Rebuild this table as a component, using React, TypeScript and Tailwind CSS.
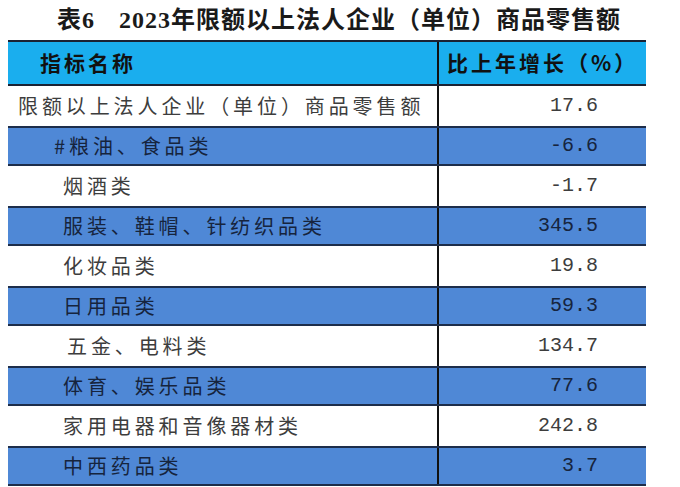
const rows = [
    { name: '限额以上法人企业（单位）商品零售额', value: '17.6', indent: 'pl-[10px]', blue: false },
    { name: '#粮油、食品类', value: '-6.6', indent: 'pl-[46px]', blue: true },
    { name: '烟酒类', value: '-1.7', indent: 'pl-[55px]', blue: false },
    { name: '服装、鞋帽、针纺织品类', value: '345.5', indent: 'pl-[55px]', blue: true },
    { name: '化妆品类', value: '19.8', indent: 'pl-[55px]', blue: false },
    { name: '日用品类', value: '59.3', indent: 'pl-[55px]', blue: true },
    { name: '五金、电料类', value: '134.7', indent: 'pl-[59px]', blue: false },
    { name: '体育、娱乐品类', value: '77.6', indent: 'pl-[55px]', blue: true },
    { name: '家用电器和音像器材类', value: '242.8', indent: 'pl-[55px]', blue: false },
    { name: '中西药品类', value: '3.7', indent: 'pl-[55px]', blue: true },
];

export default function App() {
    return (
        <div className="h-[487px] w-[680px] overflow-hidden bg-white font-['Liberation_Serif','Noto_Sans_CJK_SC',serif]">
            <div className="flex h-[40px] items-center justify-center pr-[2px]">
                <h1 className="text-[24px] font-bold tracking-[1px] text-[#1a1a1a]">
                    表6<span className="inline-block w-[24px]" />2023年限额以上法人企业（单位）商品零售额
                </h1>
            </div>

            <div className="ml-[8px] w-[638px]">
                <div className="flex h-[46px] border-y-2 border-[#1b2233] bg-[#1aaeee] font-['Noto_Sans_CJK_SC',sans-serif] font-bold text-[#111]">
                    <div className="flex w-[431px] items-center border-r-2 border-[#111] pl-[32px] text-[21px] tracking-[3px]">
                        指标名称
                    </div>
                    <div className="flex flex-1 items-center pl-[8px] text-[21px] tracking-[3px]">
                        比上年增长（%）
                    </div>
                </div>

                {rows.map((row) => (
                    <div
                        key={row.name}
                        className={
                            row.blue
                                ? 'flex h-[40px] border-y-2 border-[#1d2d4a] bg-[#4f88d6] text-[#16243d]'
                                : 'flex h-[40px] bg-white text-[#3d3d3d]'
                        }
                    >
                        <div
                            className={`flex w-[431px] items-center border-r-2 border-[#111] font-['Noto_Sans_CJK_SC',sans-serif] text-[20px] tracking-[3.9px] ${row.indent}`}
                        >
                            {row.name}
                        </div>
                        <div className="flex flex-1 items-center justify-end pr-[48px] font-['Liberation_Mono',monospace] text-[20px]">
                            {row.value}
                        </div>
                    </div>
                ))}
            </div>
        </div>
    );
}
